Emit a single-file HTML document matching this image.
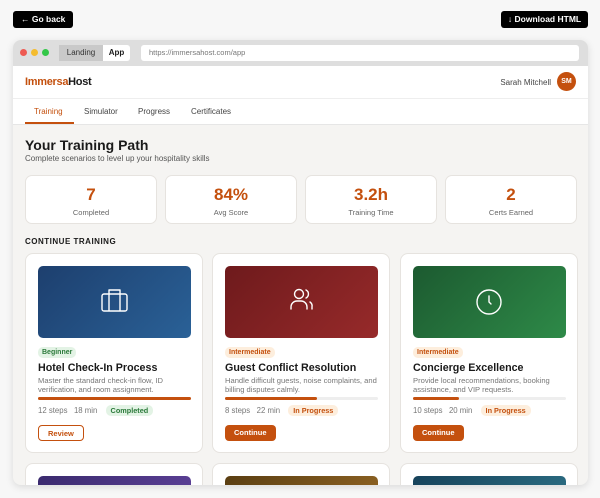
<!DOCTYPE html>
<html><head><style>
*{box-sizing:border-box;margin:0;padding:0}
body{width:600px;height:498px;background:#f7f7f7;font-family:"Liberation Sans",sans-serif;position:relative;overflow:hidden;color:#1a1a1a}
.btn{position:absolute;top:11px;height:17px;background:#000;color:#fff;font-size:8.5px;font-weight:bold;border-radius:3px;line-height:17px;padding:0 8px}
.win{position:absolute;left:13px;top:40px;width:575px;height:445px;border-radius:8px;overflow:hidden;background:#f5f4f2;box-shadow:0 2px 8px rgba(0,0,0,.12)}
.tb{height:26px;background:#dedede;position:relative}
.dot{position:absolute;top:9px;width:7px;height:7px;border-radius:50%}
.tab{position:absolute;top:5px;height:16px;font-size:8px;line-height:16px;text-align:center}
.url{position:absolute;left:128px;top:5px;width:438px;height:16px;background:#fff;border-radius:3px;font-size:7.5px;color:#777;line-height:16px;padding-left:8px}
.hdr{height:33px;background:#fff;border-bottom:1px solid #eee;position:relative}
.nav{height:26px;background:#fff;border-bottom:1px solid #e6e6e6;position:relative;font-size:8px;color:#444}
.nav span{position:absolute;top:8px}
.stat{position:absolute;top:135px;width:132px;height:49px;background:#fff;border:1px solid #e6e3df;border-radius:7px;text-align:center}
.stat b{display:block;font-size:17px;color:#c4500e;margin-top:9px}
.stat i{font-style:normal;font-size:7.5px;color:#666;display:block;margin-top:3px}
.card{position:absolute;width:178px;height:200px;background:#fff;border:1px solid #e6e3df;border-radius:8px}
.img{position:absolute;left:12px;top:12px;width:153px;height:72px;border-radius:5px}
.pill{position:absolute;left:12px;top:93px;height:11px;line-height:11px;font-size:7px;font-weight:bold;padding:0 4px;border-radius:5px}
.tt{position:absolute;left:12px;top:108px;font-size:10.7px;font-weight:bold;white-space:nowrap}
.ds{position:absolute;left:12px;top:122px;font-size:7.6px;color:#777;line-height:9px;width:153px}
.bar{position:absolute;left:12px;top:143px;width:153px;height:3px;background:#eee;border-radius:2px}
.bar div{height:3px;background:#c4500e;border-radius:2px}
.meta{position:absolute;left:12px;top:151px;font-size:7.8px;color:#777;height:11px;line-height:11px;white-space:nowrap}
.meta em{font-style:normal;font-weight:bold;font-size:7.3px;padding:1px 5px;border-radius:5px;margin-left:6px}
.cb{position:absolute;left:12px;top:171px;height:16px;line-height:15px;font-size:7.5px;font-weight:bold;padding:0 9px;border-radius:4px}
</style></head><body>
<div class="btn" style="left:13px">← Go back</div>
<div class="btn" style="left:501px;width:87px;padding:0;text-align:center">↓ Download HTML</div>
<div class="win">
 <div class="tb">
  <div class="dot" style="left:7px;background:#ee5a52"></div>
  <div class="dot" style="left:18px;background:#f4bc2f"></div>
  <div class="dot" style="left:29px;background:#33c748"></div>
  <div class="tab" style="left:46px;width:44px;background:#c9c9c9;color:#333">Landing</div>
  <div class="tab" style="left:90px;width:27px;background:#fff;font-weight:bold;border-radius:0 3px 3px 0">App</div>
  <div class="url">https://immersahost.com/app</div>
 </div>
 <div class="hdr">
  <div style="position:absolute;left:12px;top:10px;font-size:11px;font-weight:bold;letter-spacing:-.3px"><span style="color:#c4500e">Immersa</span>Host</div>
  <div style="position:absolute;right:37px;top:12px;font-size:8px;color:#444">Sarah Mitchell</div>
  <div style="position:absolute;left:544px;top:6px;width:19px;height:19px;border-radius:50%;background:#c4500e;color:#fff;font-size:7px;font-weight:bold;text-align:center;line-height:19px">SM</div>
 </div>
 <div class="nav">
  <span style="left:21px;color:#c4500e">Training</span>
  <div style="position:absolute;left:12px;top:23px;width:49px;height:2px;background:#c4500e"></div>
  <span style="left:71px">Simulator</span><span style="left:125px">Progress</span><span style="left:178px">Certificates</span>
 </div>
 <div style="position:absolute;left:12px;top:97px;font-size:14px;font-weight:bold">Your Training Path</div>
 <div style="position:absolute;left:12px;top:114px;font-size:8px;color:#555">Complete scenarios to level up your hospitality skills</div>
 <div class="stat" style="left:12px"><b>7</b><i>Completed</i></div>
 <div class="stat" style="left:152px"><b>84%</b><i>Avg Score</i></div>
 <div class="stat" style="left:292px"><b>3.2h</b><i>Training Time</i></div>
 <div class="stat" style="left:432px"><b>2</b><i>Certs Earned</i></div>
 <div style="position:absolute;left:12px;top:197px;font-size:8px;font-weight:bold;letter-spacing:.5px">CONTINUE TRAINING</div>

 <div class="card" style="left:12px;top:213px">
  <div class="img" style="background:linear-gradient(135deg,#1d3f6e,#2a6197)">
   <svg width="153" height="72" viewBox="0 0 153 72"><g fill="none" stroke="#fff" stroke-width="1.4" stroke-linejoin="round"><rect x="64" y="28" width="25" height="17" rx="2"/><path d="M71 28v-4h11v4M71 28v17M82 28v17"/></g></svg>
  </div>
  <div class="pill" style="background:#e3f3e5;color:#2b7a3a">Beginner</div>
  <div class="tt">Hotel Check-In Process</div>
  <div class="ds">Master the standard check-in flow, ID verification, and room assignment.</div>
  <div class="bar"><div style="width:100%"></div></div>
  <div class="meta">12 steps &nbsp; 18 min <em style="background:#e3f3e5;color:#2b7a3a">Completed</em></div>
  <div class="cb" style="border:1px solid #c4500e;color:#c4500e">Review</div>
 </div>
 <div class="card" style="left:199px;top:213px">
  <div class="img" style="background:linear-gradient(135deg,#6e1a1c,#972a2a)">
   <svg width="153" height="72" viewBox="0 0 153 72"><g fill="none" stroke="#fff" stroke-width="1.4" stroke-linecap="round"><circle cx="74" cy="28" r="4.5"/><path d="M66 43v-2a6 6 0 0 1 6-6h4a6 6 0 0 1 6 6v2M81 24a4.5 4.5 0 0 1 0 8M85 36a5 5 0 0 1 2 5v2"/></g></svg>
  </div>
  <div class="pill" style="background:#fdeedd;color:#c4500e">Intermediate</div>
  <div class="tt">Guest Conflict Resolution</div>
  <div class="ds">Handle difficult guests, noise complaints, and billing disputes calmly.</div>
  <div class="bar"><div style="width:60%"></div></div>
  <div class="meta">8 steps &nbsp; 22 min <em style="background:#fdeedd;color:#c4500e">In Progress</em></div>
  <div class="cb" style="background:#c4500e;color:#fff">Continue</div>
 </div>
 <div class="card" style="left:387px;top:213px">
  <div class="img" style="background:linear-gradient(135deg,#1c5a30,#2e8a48)">
   <svg width="153" height="72" viewBox="0 0 153 72"><g fill="none" stroke="#fff" stroke-width="1.4" stroke-linecap="round"><circle cx="76" cy="36" r="12"/><path d="M76 30v6l2 2"/></g></svg>
  </div>
  <div class="pill" style="background:#fdeedd;color:#c4500e">Intermediate</div>
  <div class="tt">Concierge Excellence</div>
  <div class="ds">Provide local recommendations, booking assistance, and VIP requests.</div>
  <div class="bar"><div style="width:30%"></div></div>
  <div class="meta">10 steps &nbsp; 20 min <em style="background:#fdeedd;color:#c4500e">In Progress</em></div>
  <div class="cb" style="background:#c4500e;color:#fff">Continue</div>
 </div>
 <div class="card" style="left:12px;top:423px;height:22px;border-radius:8px 8px 0 0;border-bottom:0"><div class="img" style="height:10px;border-radius:5px 5px 0 0;background:linear-gradient(135deg,#3a2a6e,#5a3f94)"></div></div>
 <div class="card" style="left:199px;top:423px;height:22px;border-radius:8px 8px 0 0;border-bottom:0"><div class="img" style="height:10px;border-radius:5px 5px 0 0;background:linear-gradient(135deg,#5a3e12,#8a6022)"></div></div>
 <div class="card" style="left:387px;top:423px;height:22px;border-radius:8px 8px 0 0;border-bottom:0"><div class="img" style="height:10px;border-radius:5px 5px 0 0;background:linear-gradient(135deg,#16425a,#2a6a80)"></div></div>
</div>
</body></html>
